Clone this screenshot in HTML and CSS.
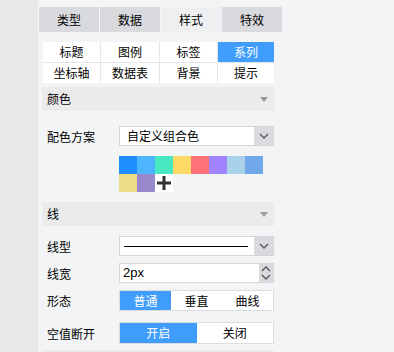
FILE: index.html
```html
<!DOCTYPE html>
<html lang="zh">
<head>
    <meta charset="UTF-8">
    <title>样式</title>
    <link rel="stylesheet" href="styles.css">
</head>
<body>
    <div class="side"></div>
    <div class="panel">
        <div class="tabs">
            <div class="tab">类型</div>
            <div class="tab">数据</div>
            <div class="tab active">样式</div>
            <div class="tab">特效</div>
        </div>
        <div class="box">
            <div class="subtabs">
                <div>标题</div><div>图例</div><div>标签</div><div class="on">系列</div>
                <div>坐标轴</div><div>数据表</div><div>背景</div><div>提示</div>
            </div>

            <div class="head head-color">颜色<span class="tri"></span></div>
            <div class="row row-scheme">
                <label>配色方案</label>
                <div class="select">
                    <span class="val">自定义组合色</span>
                    <span class="btn"><svg width="10" height="6" viewBox="0 0 10 6"><path d="M1 1 L5 5 L9 1" fill="none" stroke="#555" stroke-width="1.3"/></svg></span>
                </div>
            </div>
            <div class="swatches">
                <span style="background:#1e8fff"></span>
                <span style="background:#4db5ff"></span>
                <span style="background:#48e8c2"></span>
                <span style="background:#ffd966"></span>
                <span style="background:#ff7378"></span>
                <span style="background:#a283ff"></span>
                <span style="background:#a9d1ea"></span>
                <span style="background:#70a8ea"></span>
                <span style="background:#eddc8a"></span>
                <span style="background:#9a88cd"></span>
                <span class="plus"><svg width="14" height="14" viewBox="0 0 14 14"><path d="M7 0 V14 M0 7 H14" stroke="#333" stroke-width="3"/></svg></span>
            </div>

            <div class="head head-line">线<span class="tri"></span></div>
            <div class="row row-type">
                <label>线型</label>
                <div class="select">
                    <span class="val"><i class="stroke"></i></span>
                    <span class="btn"><svg width="10" height="6" viewBox="0 0 10 6"><path d="M1 1 L5 5 L9 1" fill="none" stroke="#555" stroke-width="1.3"/></svg></span>
                </div>
            </div>
            <div class="row row-width">
                <label>线宽</label>
                <div class="select">
                    <span class="val num">2px</span>
                    <span class="spin">
                        <svg width="10" height="6" viewBox="0 0 10 6"><path d="M1 5 L5 1 L9 5" fill="none" stroke="#555" stroke-width="1.3"/></svg>
                        <svg width="10" height="6" viewBox="0 0 10 6"><path d="M1 1 L5 5 L9 1" fill="none" stroke="#555" stroke-width="1.3"/></svg>
                    </span>
                </div>
            </div>
            <div class="row row-shape">
                <label>形态</label>
                <div class="seg three">
                    <span class="on">普通</span><span>垂直</span><span>曲线</span>
                </div>
            </div>
            <div class="row row-null">
                <label>空值断开</label>
                <div class="seg two">
                    <span class="on">开启</span><span>关闭</span>
                </div>
            </div>
            <div class="head head-next"></div>
        </div>
    </div>
</body>
</html>
```
FILE: styles.css
```css
body {
    margin: 0;
    display: flex;
    height: 352px;
    overflow: hidden;
    background-color: #f3f4f6;
    font-family: "Noto Sans CJK SC", "Liberation Sans", sans-serif;
    font-size: 12px;
    color: #000;
}
.side {
    width: 38px;
    background-color: #e8e8e8;
}
.panel {
    flex: 1;
    padding-top: 7px;
}
.tabs {
    display: flex;
    gap: 1px;
    margin-left: 1px;
}
.tab {
    width: 60px;
    height: 25px;
    line-height: 25px;
    text-align: center;
    background-color: #d9dadd;
}
.tab.active {
    background-color: #eeeff1;
}
.box {
    width: 232px;
    margin-left: 4px;
}
.subtabs {
    display: grid;
    grid-template-columns: 57px 58px 57px 56px;
    grid-auto-rows: 20px;
    gap: 1px;
    margin: 10px 0 0 1px;
    width: 231px;
    background-color: #e6e6e8;
}
.subtabs div {
    background-color: #fff;
    text-align: center;
    line-height: 20px;
}
.subtabs .on {
    background-color: #419dfb;
    color: #fff;
}
.head {
    position: relative;
    height: 24px;
    line-height: 24px;
    padding-left: 5px;
    background-color: #ebebeb;
}
.head-color {
    margin-top: 4px;
}
.tri {
    position: absolute;
    right: 6px;
    top: 10px;
    border-left: 4px solid transparent;
    border-right: 4px solid transparent;
    border-top: 5px solid #9a9a9a;
}
.row {
    display: flex;
    align-items: center;
}
.row label {
    width: 72px;
    padding-left: 5px;
}
.select {
    display: flex;
    width: 155px;
    height: 20px;
    box-sizing: border-box;
    border: 1px solid #d6d6d8;
    background-color: #fff;
}
.val {
    flex: 1;
    display: flex;
    align-items: center;
    padding-left: 7px;
    line-height: 18px;
}
.val.num {
    padding-left: 3px;
    font-family: "Liberation Sans", sans-serif;
    font-size: 13px;
}
.btn, .spin {
    width: 19px;
    background-color: #d9dadd;
    display: flex;
    align-items: center;
    justify-content: center;
}
.spin {
    width: 14px;
    flex-direction: column;
    gap: 2px;
}
.stroke {
    display: block;
    width: 124px;
    border-top: 1px solid #000;
    margin-left: -3px;
}
.row-scheme {
    margin-top: 15px;
}
.swatches {
    display: grid;
    grid-template-columns: repeat(8, 18px);
    grid-auto-rows: 18px;
    margin: 10px 0 0 77px;
}
.plus {
    background-color: #fff;
    display: flex;
    align-items: center;
    justify-content: center;
}
.head-line {
    margin-top: 10px;
}
.row-type {
    margin-top: 10px;
}
.row-width {
    margin-top: 7px;
}
.row-shape {
    margin-top: 7px;
}
.row-null {
    margin-top: 11px;
}
.seg {
    display: flex;
    width: 155px;
    box-sizing: border-box;
    border: 1px solid #dcdcde;
    background-color: #fff;
}
.seg span {
    flex: 1;
    text-align: center;
}
.seg.three {
    height: 21px;
    line-height: 19px;
}
.seg.two {
    height: 22px;
    line-height: 20px;
}
.seg .on {
    background-color: #419dfb;
    color: #fff;
}
.head-next {
    margin-top: 6px;
}
```
